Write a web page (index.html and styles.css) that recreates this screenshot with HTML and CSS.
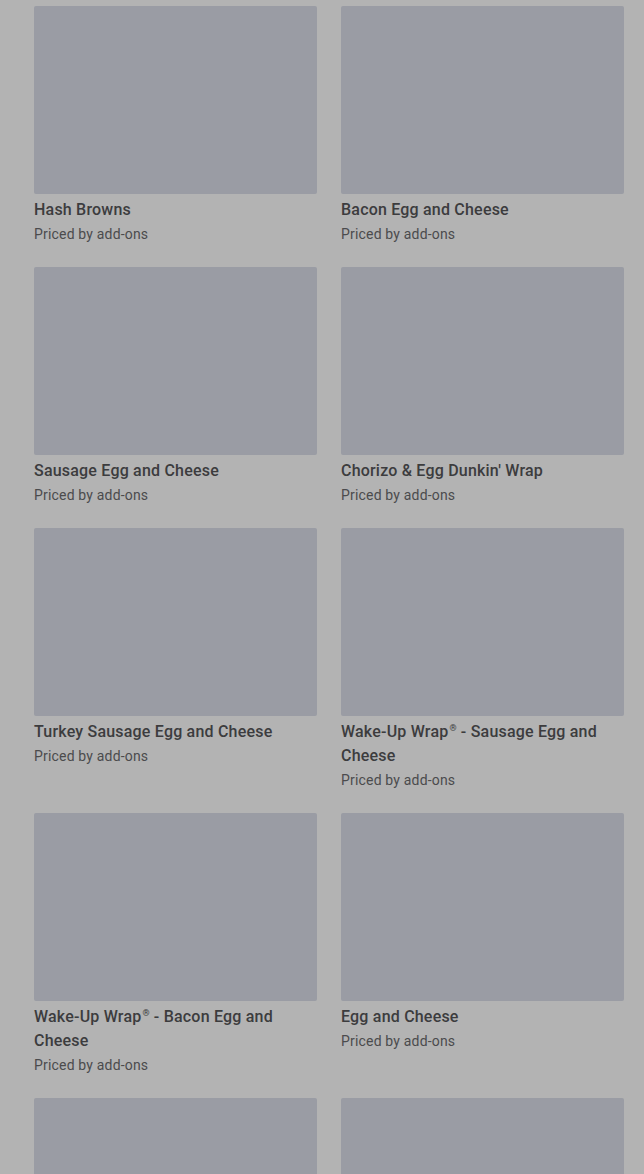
FILE: index.html
```html
<!DOCTYPE html>
<html lang="en">
  <head>
    <meta charset="UTF-8" />
    <meta name="viewport" content="width=device-width, initial-scale=1.0" />
    <title>Breakfast Menu</title>
    <link rel="stylesheet" href="styles.css">
  </head>

  <body>
    <ul class="menu-grid">
      <li class="menu-item">
        <div class="item-image"></div>
        <div class="item-name">Hash Browns</div>
        <div class="item-price">Priced by add-ons</div>
      </li>
      <li class="menu-item">
        <div class="item-image"></div>
        <div class="item-name">Bacon Egg and Cheese</div>
        <div class="item-price">Priced by add-ons</div>
      </li>
      <li class="menu-item">
        <div class="item-image"></div>
        <div class="item-name">Sausage Egg and Cheese</div>
        <div class="item-price">Priced by add-ons</div>
      </li>
      <li class="menu-item">
        <div class="item-image"></div>
        <div class="item-name">Chorizo &amp; Egg Dunkin' Wrap</div>
        <div class="item-price">Priced by add-ons</div>
      </li>
      <li class="menu-item">
        <div class="item-image"></div>
        <div class="item-name">Turkey Sausage Egg and Cheese</div>
        <div class="item-price">Priced by add-ons</div>
      </li>
      <li class="menu-item">
        <div class="item-image"></div>
        <div class="item-name">Wake-Up Wrap<span class="reg">®</span> - Sausage Egg and Cheese</div>
        <div class="item-price">Priced by add-ons</div>
      </li>
      <li class="menu-item">
        <div class="item-image"></div>
        <div class="item-name">Wake-Up Wrap<span class="reg">®</span> - Bacon Egg and Cheese</div>
        <div class="item-price">Priced by add-ons</div>
      </li>
      <li class="menu-item">
        <div class="item-image"></div>
        <div class="item-name">Egg and Cheese</div>
        <div class="item-price">Priced by add-ons</div>
      </li>
      <!-- next row, only the image tops are in view -->
      <li class="menu-item">
        <div class="item-image"></div>
      </li>
      <li class="menu-item">
        <div class="item-image"></div>
      </li>
    </ul>
  </body>
</html>
```

FILE: styles.css
```css
:root {
  --overlay-bg: #b3b3b3;
  --placeholder: #9a9ca4;
  --text-main: #3c3c3e;
  --text-sub: #4b4b4d;
}
html,
body {
  margin: 0;
  background: var(--overlay-bg);
  overflow: hidden;
}
body {
  font-family: Roboto, "Liberation Sans", sans-serif;
}
.menu-grid {
  list-style: none;
  margin: 0;
  padding: 6px 20px 0 34px;
  display: grid;
  grid-template-columns: 283px 283px;
  column-gap: 24px;
  row-gap: 23px;
  align-items: start;
}
.menu-item {
  display: flex;
  flex-direction: column;
}
.item-image {
  height: 188px;
  background: var(--placeholder);
  border-radius: 2px;
  margin-bottom: 4px;
}
.item-name {
  font-size: 16px;
  line-height: 24px;
  font-weight: 500;
  letter-spacing: 0.2px;
  color: var(--text-main);
}
.reg {
  font-size: 9px;
  line-height: 12px;
  vertical-align: text-top;
  margin-left: 1px;
}
.item-price {
  font-size: 14px;
  line-height: 20px;
  letter-spacing: 0.18px;
  margin-top: 2px;
  color: var(--text-sub);
}
```
